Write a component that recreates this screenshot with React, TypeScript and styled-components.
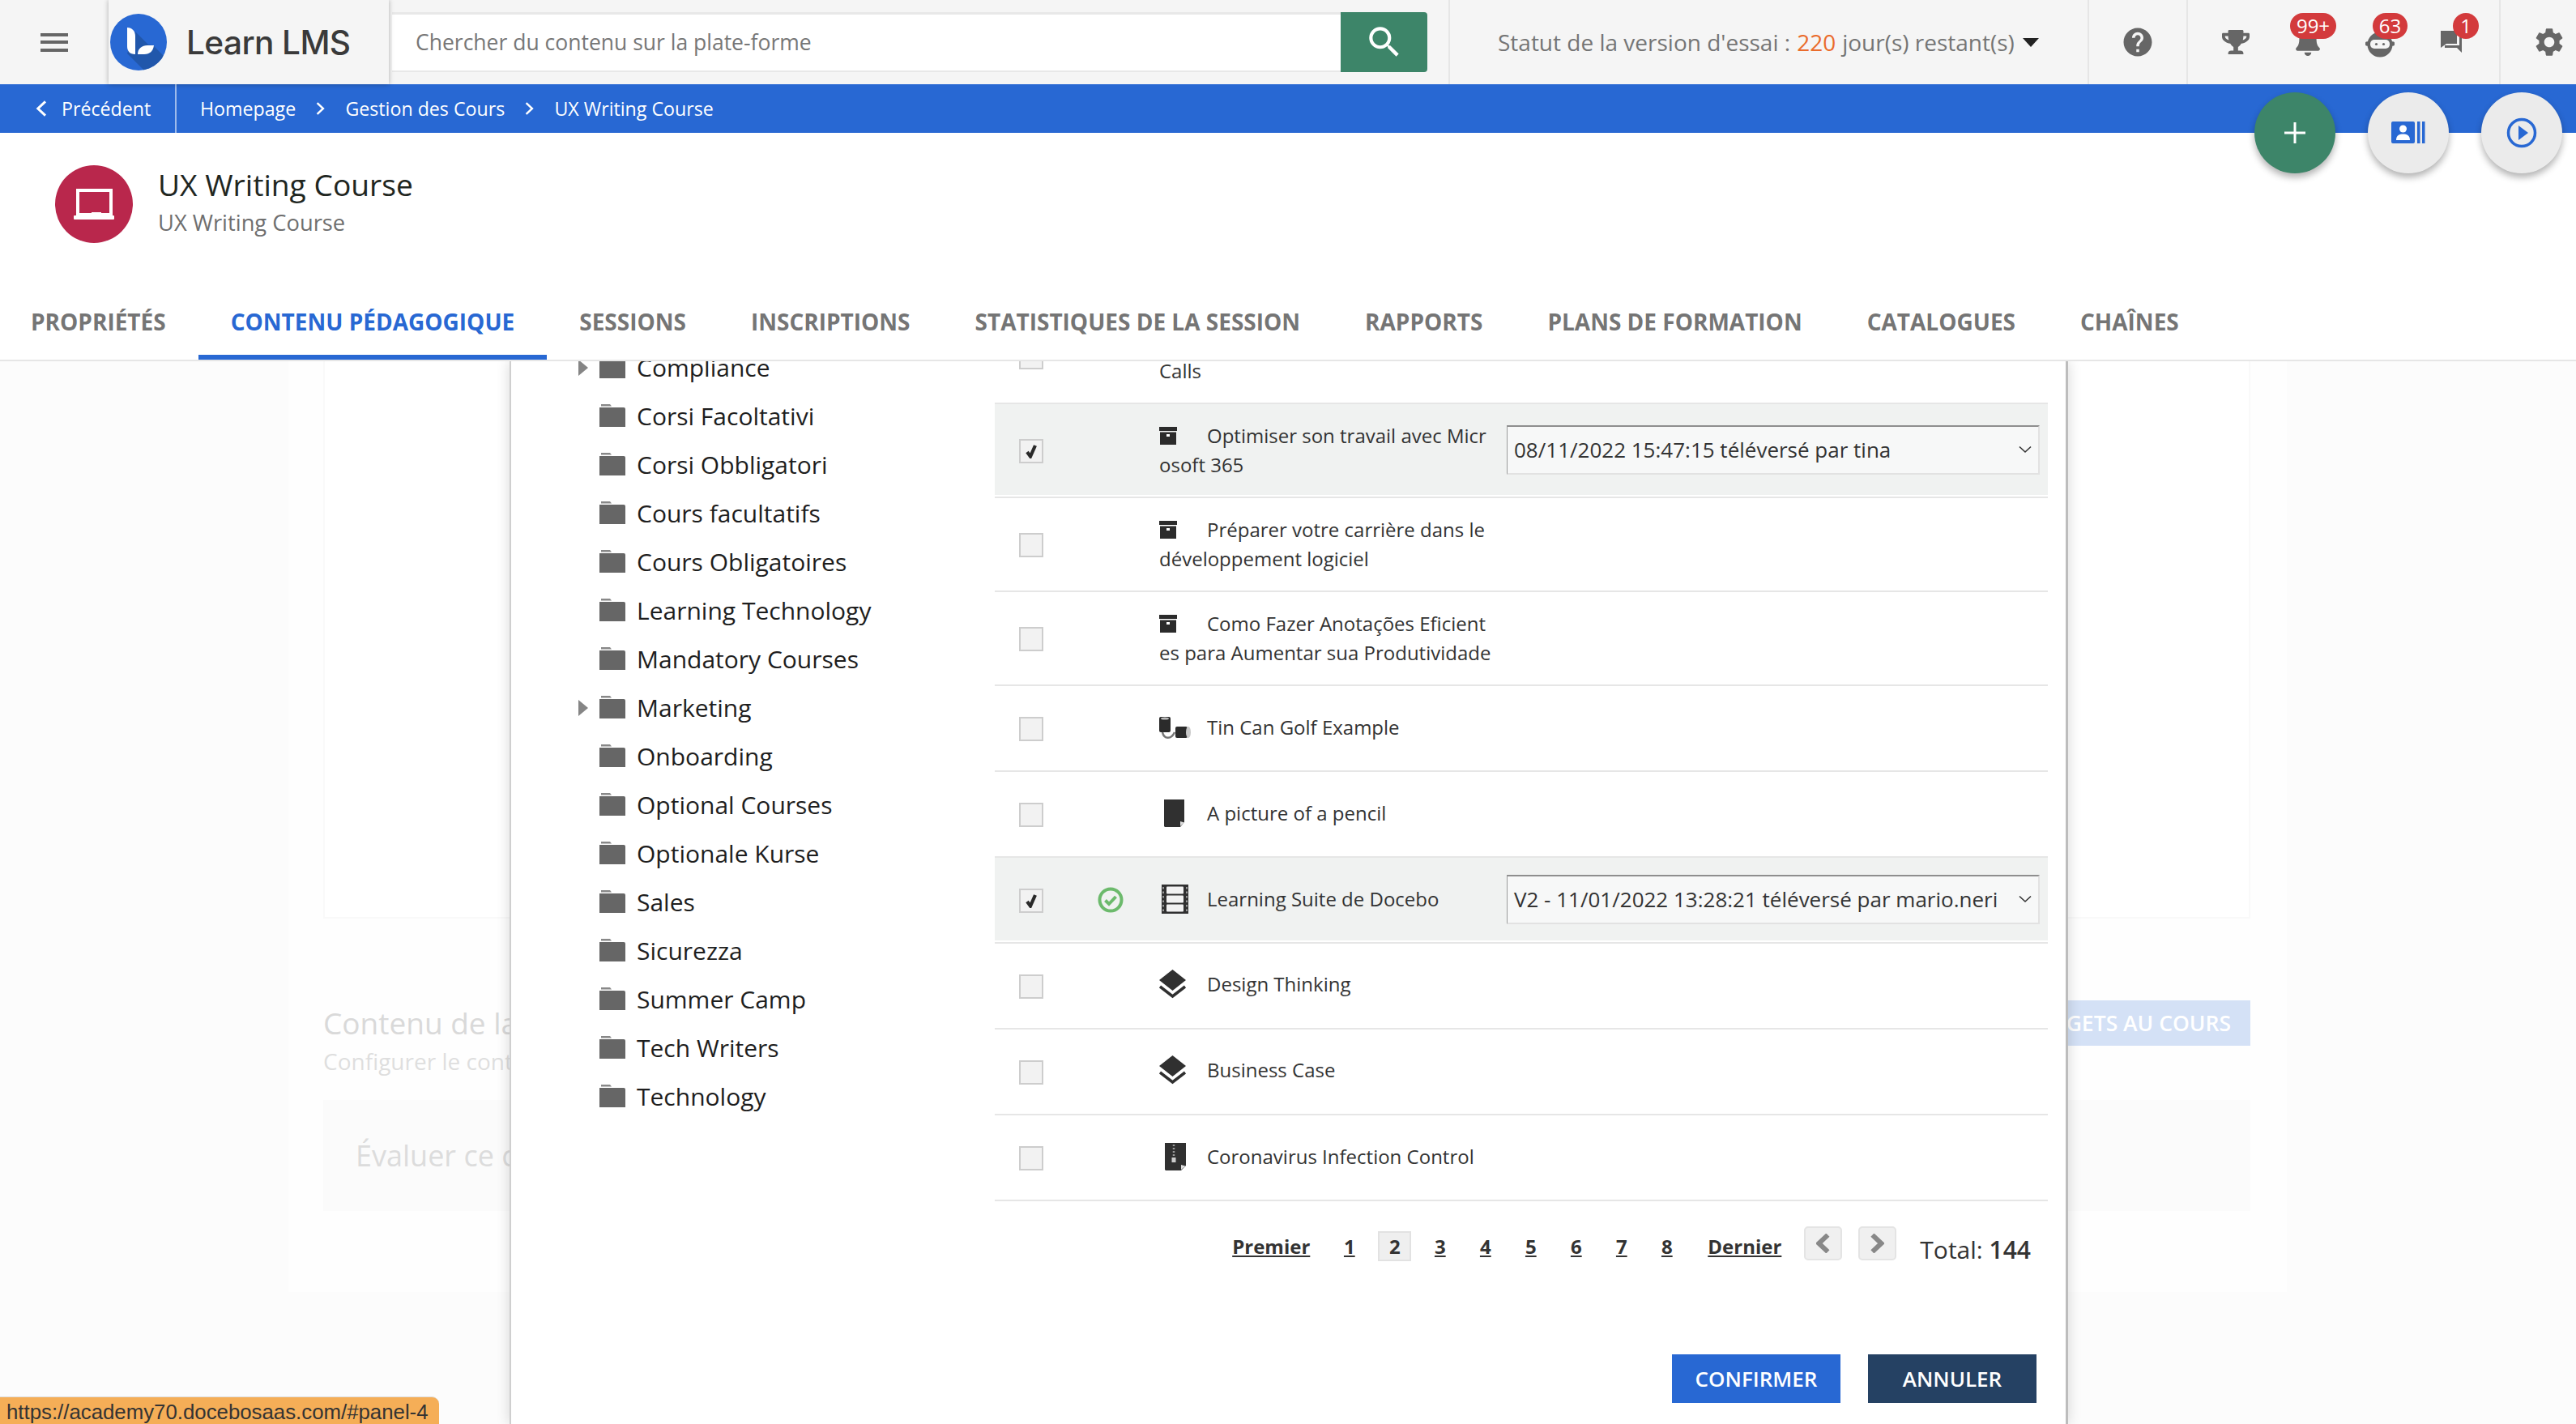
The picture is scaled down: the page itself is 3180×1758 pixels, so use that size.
import React from "react";
import styled, { createGlobalStyle } from "styled-components";
import { FaBell, FaTrophy } from "react-icons/fa";
import { MdHelp, MdSearch, MdSettings } from "react-icons/md";

const Global = createGlobalStyle`
  html, body { margin: 0; padding: 0; background: #fff; }
  * { box-sizing: border-box; }
  body { font-family: "Open Sans", "Noto Sans", sans-serif; color: #333; }
`;

const Page = styled.div`
  position: relative;
  width: 3180px;
  height: 1758px;
  overflow: hidden;
  display: flex;
  flex-direction: column;
  background: #fff;
`;

/* top bar */
const TopBar = styled.header`
  height: 104px;
  flex: none;
  display: flex;
  align-items: stretch;
  background: #f5f5f5;
`;
const MenuSlot = styled.div`
  width: 134px;
  display: flex;
  align-items: center;
  justify-content: center;
`;
const Hamburger = styled.div`
  width: 34px;
  height: 23px;
  border-top: 4px solid #666;
  border-bottom: 4px solid #666;
  position: relative;
  &::after {
    content: "";
    position: absolute;
    left: 0;
    right: 0;
    top: 5.5px;
    height: 4px;
    background: #666;
  }
`;
const LogoBlock = styled.div`
  width: 346px;
  display: flex;
  align-items: center;
  gap: 24px;
  padding-left: 2px;
  background: #f5f5f5;
  box-shadow: 0 0 6px rgba(0, 0, 0, 0.3);
  position: relative;
  z-index: 3;
`;
const LogoText = styled.span`
  font-family: Inter, "Open Sans", sans-serif;
  font-weight: 500;
  font-size: 40.6px;
  letter-spacing: -0.6px;
  color: #3a3a3a;
`;
const SearchGroup = styled.div`
  width: 1278px;
  margin: 15px 0 15px 4px;
  display: flex;
`;
const SearchField = styled.div`
  flex: 1;
  background: #fff;
  border-top: 3px solid #e8e8e8;
  border-bottom: 2px solid #e8e8e8;
  padding: 0 0 2px 29px;
  display: flex;
  align-items: center;
  font-size: 26.5px;
  color: #777;
`;
const SearchButton = styled.div`
  width: 107px;
  background: #3d8569;
  border-radius: 0 4px 4px 0;
  display: flex;
  align-items: center;
  justify-content: center;
  color: #fff;
  font-size: 50px;
`;
const StatusSlot = styled.div`
  width: 789px;
  margin-left: 26px;
  border-left: 2px solid #e6e6e6;
  padding-left: 59px;
  display: flex;
  align-items: center;
  font-size: 28px;
  color: #757575;
`;
const Orange = styled.span`
  color: #ea6c2c;
  margin: 0 8px;
`;
const Caret = styled.span`
  width: 0;
  height: 0;
  margin-left: 10px;
  border-left: 10px solid transparent;
  border-right: 10px solid transparent;
  border-top: 11px solid #222;
`;
const HelpSlot = styled.div`
  width: 122px;
  border-left: 2px solid #e6e6e6;
  display: flex;
  align-items: center;
  justify-content: center;
  color: #666;
  font-size: 42px;
`;
const NotifySlot = styled.div`
  width: 386px;
  border-left: 2px solid #e6e6e6;
  padding-left: 14px;
  display: flex;
  align-items: center;
`;
const NotifyItem = styled.div`
  position: relative;
  width: 89px;
  height: 60px;
  display: flex;
  align-items: center;
  justify-content: center;
  color: #666;
`;
const Badge = styled.span<{ $left: number; $w: number }>`
  position: absolute;
  top: -6px;
  left: ${(p) => p.$left}px;
  width: ${(p) => p.$w}px;
  height: 32px;
  border-radius: 16px;
  background: #d33a3c;
  color: #fff;
  font-size: 24px;
  line-height: 32px;
  text-align: center;
`;
const GearSlot = styled.div`
  width: 95px;
  padding-left: 26px;
  border-left: 2px solid #e6e6e6;
  display: flex;
  align-items: center;
  justify-content: center;
  color: #666;
  font-size: 42px;
`;

/* breadcrumb */
const Crumbs = styled.nav`
  height: 60px;
  flex: none;
  display: flex;
  align-items: center;
  background: #2868d3;
  color: #fff;
  font-size: 23.2px;
`;
const BackLink = styled.div`
  width: 218px;
  height: 100%;
  padding-left: 44px;
  border-right: 2px solid rgba(255, 255, 255, 0.55);
  display: flex;
  align-items: center;
  gap: 18px;
`;
const CrumbList = styled.div`
  display: flex;
  align-items: center;
  padding-left: 29px;
  gap: 25px;
`;

/* course header */
const CourseHead = styled.div`
  height: 176px;
  flex: none;
  padding: 40px 0 0 68px;
  display: flex;
  gap: 31px;
  background: #fff;
`;
const CourseBadge = styled.div`
  width: 96px;
  height: 96px;
  border-radius: 50%;
  background: #b9274c;
`;
const CourseTexts = styled.div`
  display: flex;
  flex-direction: column;
`;
const CourseTitle = styled.div`
  font-size: 37.2px;
  line-height: 48px;
  color: #21261f;
`;
const CourseSub = styled.div`
  font-size: 27.3px;
  line-height: 38px;
  margin-top: 4px;
  color: #6f6f6f;
`;

/* tabs */
const TabBar = styled.div`
  height: 106px;
  flex: none;
  padding: 10px 0 0 0;
  display: flex;
  background: #fff;
  border-bottom: 2px solid #e6e6e6;
  position: relative;
  z-index: 2;
`;
const Tab = styled.div<{ $active?: boolean; $first?: boolean }>`
  height: 94px;
  padding: 6px 40px 0;
  margin-left: ${(p) => (p.$first ? "-2px" : "0")};
  display: flex;
  align-items: center;
  font-size: 28px;
  font-weight: 700;
  color: ${(p) => (p.$active ? "#2868d3" : "#757575")};
  border-bottom: 6px solid ${(p) => (p.$active ? "#2868d3" : "transparent")};
`;

/* body */
const Body = styled.main`
  flex: 1;
  position: relative;
  overflow: hidden;
  background: #fcfcfc;
`;
const BackPanel = styled.div`
  margin-left: 356px;
  width: 2467px;
  height: 1149px;
  padding: 0 45px 0 43px;
  background: #fefefe;
`;
const BackCard = styled.div`
  height: 688px;
  border: 2px solid #f9f9f9;
  border-top: 0;
  background: #fff;
`;
const BackHeading = styled.div`
  margin-top: 101px;
  display: flex;
  justify-content: space-between;
  align-items: flex-start;
`;
const BackTexts = styled.div`
  padding-top: 4px;
`;
const BackTitle = styled.div`
  font-size: 37px;
  line-height: 48px;
  color: #d9d9d9;
`;
const BackSub = styled.div`
  font-size: 28px;
  line-height: 46px;
  color: #dedede;
`;
const BackButton = styled.div`
  height: 56px;
  padding: 0 24px;
  display: flex;
  align-items: center;
  background: #d4e1f6;
  color: #fff;
  font-size: 26.5px;
  font-weight: 600;
`;
const BackBox = styled.div`
  height: 137px;
  margin-top: 25px;
  padding-left: 40px;
  display: flex;
  align-items: center;
  background: #fbfbfb;
  font-size: 36px;
  color: #dcdcdc;
`;

/* modal */
const Modal = styled.section`
  position: absolute;
  top: 0;
  bottom: 0;
  left: 629px;
  width: 1924px;
  padding-right: 22px;
  display: flex;
  background: #fff;
  border-left: 2px solid #cfcfcf;
  border-right: 3px solid #bdbdbd;
  box-shadow: 0 0 16px rgba(0, 0, 0, 0.16);
  z-index: 1;
`;
const Tree = styled.ul`
  list-style: none;
  width: 597px;
  flex: none;
  margin: -23px 0 0;
  padding: 0 0 0 83px;
`;
const TreeItem = styled.li`
  height: 60px;
  display: flex;
  align-items: center;
  font-size: 30px;
  color: #1e1e1e;
`;
const TreeArrow = styled.span<{ $show?: boolean }>`
  width: 26px;
  flex: none;
  height: 22px;
  visibility: ${(p) => (p.$show ? "visible" : "hidden")};
  &::before {
    content: "";
    display: block;
    width: 0;
    height: 0;
    margin-top: 2px;
    border-top: 10px solid transparent;
    border-bottom: 10px solid transparent;
    border-left: 12px solid #858585;
  }
`;
const TreeLabel = styled.span`
  margin-left: 14px;
`;
const Listing = styled.div`
  flex: 1;
  min-width: 0;
  margin-top: -63px;
`;
const Row = styled.div<{ $h: number }>`
  height: ${(p) => p.$h}px;
  border-bottom: 2px solid #e6e6e6;
  padding-bottom: 2px;
`;
const RowInner = styled.div<{ $selected?: boolean }>`
  height: 100%;
  padding: 2px 10px 0 30px;
  display: grid;
  grid-template-columns: 97px 76px 429px 1fr;
  align-items: center;
  background: ${(p) => (p.$selected ? "#f0f2f1" : "transparent")};
`;
const Check = styled.span`
  width: 30px;
  height: 30px;
  margin-top: 2px;
  background: #f2f2f2;
  border: 2px solid #cdcdcd;
  display: flex;
  align-items: center;
  justify-content: center;
`;
const StatusCell = styled.div`
  display: flex;
`;
const RowText = styled.div<{ $shift?: number }>`
  width: 411px;
  margin-top: ${(p) => p.$shift ?? 0}px;
  font-size: 24px;
  line-height: 36px;
  color: #333;
  word-break: break-all;
`;
const IconSlot = styled.span`
  display: inline-block;
  width: 59px;
  height: 36px;
  vertical-align: top;
`;
const Picker = styled.div`
  height: 61px;
  margin-top: -2px;
  padding: 0 8px 0 8px;
  display: flex;
  align-items: center;
  justify-content: space-between;
  background: #f7f8f8;
  border-style: solid;
  border-color: #8e8e8e #e2e2e2 #e2e2e2 #9a9a9a;
  border-width: 2px 2px 2px 1px;
  font-size: 26px;
  color: #333;
`;

/* pagination */
const Pager = styled.div`
  margin-top: 31px;
  padding-right: 21px;
  display: flex;
  justify-content: flex-end;
  align-items: center;
  height: 42px;
`;
const PageLinks = styled.div`
  margin-top: 6px;
  display: flex;
  align-items: center;
  gap: 15px;
`;
const PageWord = styled.a<{ $left?: number; $right?: number }>`
  font-size: 24px;
  font-weight: 700;
  color: #333;
  text-decoration: underline;
  margin-left: ${(p) => p.$left ?? 0}px;
  margin-right: ${(p) => p.$right ?? 0}px;
`;
const PageNum = styled.a<{ $active?: boolean }>`
  width: 41px;
  height: 37px;
  display: flex;
  align-items: center;
  justify-content: center;
  font-size: 24px;
  font-weight: 700;
  color: #333;
  text-decoration: ${(p) => (p.$active ? "none" : "underline")};
  background: ${(p) => (p.$active ? "#efefef" : "transparent")};
  border: 2px solid ${(p) => (p.$active ? "#e2e2e2" : "transparent")};
`;
const NavButton = styled.span<{ $gap: number }>`
  width: 47px;
  height: 42px;
  margin-left: ${(p) => p.$gap}px;
  display: flex;
  align-items: center;
  justify-content: center;
  background: #f0f0f0;
  border: 2px solid #e4e4e4;
  border-radius: 5px;
`;
const Total = styled.div`
  margin: 14px 0 0 29px;
  font-size: 30px;
  color: #333;
  b {
    font-weight: 600;
  }
`;
const Actions = styled.div`
  margin-top: 116px;
  padding-right: 14px;
  display: flex;
  justify-content: flex-end;
  gap: 34px;
`;
const ActionButton = styled.div<{ $dark?: boolean }>`
  width: 208px;
  height: 60px;
  display: flex;
  align-items: center;
  justify-content: center;
  font-size: 26px;
  font-weight: 600;
  color: #fff;
  background: ${(p) => (p.$dark ? "#254163" : "#2868d3")};
`;

/* overlays */
const Fabs = styled.div`
  position: absolute;
  top: 114px;
  left: 2783px;
  display: flex;
  gap: 40px;
  z-index: 5;
`;
const Fab = styled.div<{ $green?: boolean }>`
  width: 100px;
  height: 100px;
  border-radius: 50%;
  display: flex;
  align-items: center;
  justify-content: center;
  background: ${(p) => (p.$green ? "#3d8569" : "#ebebeb")};
  box-shadow: 0 5px 8px rgba(0, 0, 0, 0.3);
`;
const UrlTip = styled.div`
  position: absolute;
  left: 0;
  bottom: 0;
  width: 542px;
  height: 34px;
  padding-left: 8px;
  overflow: hidden;
  background: #f5ae57;
  border-top: 1px solid #ddd;
  border-radius: 0 9px 0 0;
  font-family: "Liberation Sans", Arial, sans-serif;
  font-size: 25.8px;
  line-height: 37px;
  color: #333;
  z-index: 6;
`;

/* drawings */
const LogoMark = () => (
  <svg width="70" height="70" viewBox="0 0 70 70">
    <defs>
      <clipPath id="lc">
        <circle cx="35" cy="35" r="35" />
      </clipPath>
    </defs>
    <circle cx="35" cy="35" r="35" fill="#2868d3" />
    <polygon points="31,22 47,38 53,39 70,56 70,70 42,70 21,49" fill="#2157ab" clipPath="url(#lc)" />
    <path d="M21 17 C27 17 31 21 31 28 L31 50 C24 50 21 46 21 40 Z" fill="#fff" />
    <path d="M34 50 C34 43 39 39 46 39 L54 39 C53 46 49 50 42 50 Z" fill="#fff" />
  </svg>
);
const LaptopMark = () => (
  <svg width="96" height="96" viewBox="0 0 96 96">
    <rect x="28" y="31" width="41" height="30" fill="none" stroke="#fff" strokeWidth="4" />
    <rect x="23" y="62" width="50" height="5" rx="1" fill="#fff" />
    <rect x="45" y="58" width="12" height="5" fill="#fff" />
  </svg>
);
const Chevron = ({ left = false, h = 16, sw = 2.4, color = "#fff" }: { left?: boolean; h?: number; sw?: number; color?: string }) => (
  <svg width={h * 0.7} height={h} viewBox="0 0 7 10" style={{ flex: "none" }}>
    <path d={left ? "M6 .7 1.4 5 6 9.3" : "M1 .7 5.6 5 1 9.3"} fill="none" stroke={color} strokeWidth={sw * 10 / h} />
  </svg>
);
const Robot = () => (
  <svg width="36" height="32" viewBox="0 0 36 32" style={{ marginTop: 6 }}>
    <circle cx="18" cy="16" r="15.5" fill="#666" />
    <circle cx="2.5" cy="15" r="2.8" fill="#666" />
    <circle cx="33.5" cy="15" r="2.8" fill="#666" />
    <rect x="6" y="10" width="24" height="11" rx="5" fill="#f5f5f5" />
    <circle cx="13.5" cy="15.5" r="1.6" fill="#666" />
    <circle cx="22.5" cy="15.5" r="1.6" fill="#666" />
  </svg>
);
const Chat = () => (
  <svg width="30" height="30" viewBox="0 0 30 30">
    <path d="M1 1H21V17H8L1 22Z" fill="#666" />
    <path d="M24 8H27V28L21 22H6V19H24Z" fill="#666" />
  </svg>
);
const Folder = () => (
  <svg width="32" height="30" viewBox="0 0 32 30" style={{ flex: "none" }}>
    <path d="M2 1H13L15 3.5H2Z" fill="#888" />
    <path d="M0 5H30Q32 5 32 7V29H0Z" fill="#666" />
  </svg>
);
const Tick = () => (
  <svg width="14" height="18" viewBox="0 0 14 18">
    <path d="M2 10 6 15.5 12 2" fill="none" stroke="#2a2a2a" strokeWidth="4.2" />
  </svg>
);
const GreenCheck = () => (
  <svg width="32" height="32" viewBox="0 0 32 32">
    <circle cx="16" cy="16" r="13.5" fill="none" stroke="#6cba6c" strokeWidth="4" />
    <path d="M9.5 16.5 14 21 22.5 12" fill="none" stroke="#6cba6c" strokeWidth="4" />
  </svg>
);
const Archive = () => (
  <svg width="40" height="36" viewBox="0 0 40 36">
    <rect x="0" y="7" width="22" height="5" fill="#2b2b2b" />
    <rect x="1" y="13.5" width="20" height="15.5" fill="#2b2b2b" />
    <rect x="9" y="16" width="4" height="3" fill="#fff" />
  </svg>
);
const TinCans = () => (
  <svg width="40" height="36" viewBox="0 0 40 36">
    <rect x="0" y="5" width="14" height="19" rx="2" fill="#2b2b2b" />
    <ellipse cx="7" cy="7" rx="5" ry="1.6" fill="#bbb" />
    <path d="M4 24C6 33 15 33 19 24" fill="none" stroke="#777" strokeWidth="2.5" />
    <rect x="20" y="17" width="15" height="14" rx="2" fill="#2b2b2b" />
    <ellipse cx="36" cy="24" rx="3" ry="7" fill="#c9c9c9" />
  </svg>
);
const PaperDoc = () => (
  <svg width="40" height="36" viewBox="0 0 40 36">
    <path d="M6 1H31V29L26 35H7L6 34Z" fill="#303030" />
    <path d="M26 34L31 29.5 L26 28Z" fill="#ddd" />
  </svg>
);
const Film = () => (
  <svg width="40" height="36" viewBox="0 0 40 36">
    <rect x="3" y="0" width="33" height="36" fill="#303030" />
    <path d="M5 3V33M34 3V33" stroke="#999" strokeWidth="2" strokeDasharray="2.5 3" />
    <rect x="9" y="2.5" width="21" height="9" rx="1" fill="#f2f2f2" />
    <rect x="9" y="13.5" width="21" height="9" rx="1" fill="#f2f2f2" />
    <rect x="9" y="24.5" width="21" height="9" rx="1" fill="#f2f2f2" />
  </svg>
);
const Stack = () => (
  <svg width="40" height="36" viewBox="0 0 40 36">
    <path d="M16.5 0 33 13 16.5 26 0 13Z" fill="#303030" />
    <path d="M1 21 16.5 33 32 21" fill="none" stroke="#303030" strokeWidth="3.5" />
  </svg>
);
const ZipDoc = () => (
  <svg width="40" height="36" viewBox="0 0 40 36">
    <path d="M7 1H33V29L27 35H8L7 34Z" fill="#303030" />
    <path d="M27 34L32.5 29.5 L27 28Z" fill="#ddd" />
    <path d="M18 3V18" stroke="#999" strokeWidth="2.5" strokeDasharray="2 2" />
    <rect x="15.5" y="19" width="5" height="6" fill="#ccc" />
  </svg>
);
const Down = () => (
  <svg width="16" height="10" viewBox="0 0 16 10">
    <path d="M1 1.5 8 8 15 1.5" fill="none" stroke="#333" strokeWidth="1.6" />
  </svg>
);
const Plus = () => (
  <svg width="28" height="28" viewBox="0 0 28 28">
    <path d="M14 1V27M1 14H27" stroke="#fff" strokeWidth="3" />
  </svg>
);
const CardIcon = () => (
  <svg width="42" height="28" viewBox="0 0 42 28">
    <rect x="0" y="0" width="29" height="27" rx="2" fill="#2868d3" />
    <circle cx="14.5" cy="9" r="4.5" fill="#fff" />
    <path d="M6 23C6 17 10 15.5 14.5 15.5S23 17 23 23Z" fill="#fff" />
    <rect x="32" y="0" width="3.5" height="27" fill="#2868d3" />
    <rect x="38" y="0" width="3.5" height="27" fill="#2868d3" />
  </svg>
);
const PlayIcon = () => (
  <svg width="38" height="38" viewBox="0 0 38 38">
    <circle cx="19" cy="19" r="16.5" fill="none" stroke="#2868d3" strokeWidth="3.5" />
    <path d="M15 10 27 19 15 28Z" fill="#2868d3" />
  </svg>
);

const tabs = ["PROPRIÉTÉS", "CONTENU PÉDAGOGIQUE", "SESSIONS", "INSCRIPTIONS", "STATISTIQUES DE LA SESSION", "RAPPORTS", "PLANS DE FORMATION", "CATALOGUES", "CHAÎNES"];
const folders: [string, boolean?][] = [
  ["Compliance", true], ["Corsi Facoltativi"], ["Corsi Obbligatori"], ["Cours facultatifs"], ["Cours Obligatoires"],
  ["Learning Technology"], ["Mandatory Courses"], ["Marketing", true], ["Onboarding"], ["Optional Courses"],
  ["Optionale Kurse"], ["Sales"], ["Sicurezza"], ["Summer Camp"], ["Tech Writers"], ["Technology"],
];
type Item = { h: number; icon?: React.ReactNode; text: string; checked?: boolean; ok?: boolean; version?: string; shift?: number };
const rows: Item[] = [
  { h: 116, shift: 36, text: "Calls" },
  { h: 116, icon: <Archive />, text: "Optimiser son travail avec Microsoft 365", checked: true, version: "08/11/2022 15:47:15 téléversé par tina" },
  { h: 116, icon: <Archive />, text: "Préparer votre carrière dans le développement logiciel" },
  { h: 116, icon: <Archive />, text: "Como Fazer Anotações Eficientes para Aumentar sua Produtividade" },
  { h: 106, shift: -2, icon: <TinCans />, text: "Tin Can Golf Example" },
  { h: 106, shift: -3, icon: <PaperDoc />, text: "A picture of a pencil" },
  { h: 106, shift: -3, icon: <Film />, text: "Learning Suite de Docebo", checked: true, ok: true, version: "V2 - 11/01/2022 13:28:21 téléversé par mario.neri" },
  { h: 106, shift: -4, icon: <Stack />, text: "Design Thinking" },
  { h: 106, shift: -4, icon: <Stack />, text: "Business Case" },
  { h: 106, shift: -3, icon: <ZipDoc />, text: "Coronavirus Infection Control" },
];

export default function App() {
  return (
    <Page>
      <Global />
      <TopBar>
        <MenuSlot><Hamburger /></MenuSlot>
        <LogoBlock><LogoMark /><LogoText>Learn LMS</LogoText></LogoBlock>
        <SearchGroup>
          <SearchField>Chercher du contenu sur la plate-forme</SearchField>
          <SearchButton><MdSearch /></SearchButton>
        </SearchGroup>
        <StatusSlot>
          Statut de la version d'essai :<Orange>220</Orange>jour(s) restant(s)<Caret />
        </StatusSlot>
        <HelpSlot><MdHelp /></HelpSlot>
        <NotifySlot>
          <NotifyItem><FaTrophy size={34} /></NotifyItem>
          <NotifyItem><FaBell size={34} /><Badge $left={23} $w={57}>99+</Badge></NotifyItem>
          <NotifyItem><Robot /><Badge $left={36} $w={43}>63</Badge></NotifyItem>
          <NotifyItem><Chat /><Badge $left={46} $w={32}>1</Badge></NotifyItem>
        </NotifySlot>
        <GearSlot><MdSettings /></GearSlot>
      </TopBar>
      <Crumbs>
        <BackLink><Chevron left h={20} sw={3} />Précédent</BackLink>
        <CrumbList>
          <span>Homepage</span><Chevron />
          <span>Gestion des Cours</span><Chevron />
          <span>UX Writing Course</span>
        </CrumbList>
      </Crumbs>
      <CourseHead>
        <CourseBadge><LaptopMark /></CourseBadge>
        <CourseTexts>
          <CourseTitle>UX Writing Course</CourseTitle>
          <CourseSub>UX Writing Course</CourseSub>
        </CourseTexts>
      </CourseHead>
      <TabBar>
        {tabs.map((t, i) => (
          <Tab key={t} $first={i === 0} $active={i === 1}>{t}</Tab>
        ))}
      </TabBar>
      <Body>
        <BackPanel>
          <BackCard />
          <BackHeading>
            <BackTexts>
              <BackTitle>Contenu de la page</BackTitle>
              <BackSub>Configurer le contenu</BackSub>
            </BackTexts>
            <BackButton>AJOUTER DES WIDGETS AU COURS</BackButton>
          </BackHeading>
          <BackBox>Évaluer ce cours</BackBox>
        </BackPanel>
        <Modal>
          <Tree>
            {folders.map(([name, arrow]) => (
              <TreeItem key={name}>
                <TreeArrow $show={arrow} />
                <Folder />
                <TreeLabel>{name}</TreeLabel>
              </TreeItem>
            ))}
          </Tree>
          <Listing>
            {rows.map((r) => (
              <Row key={r.text} $h={r.h}>
                <RowInner $selected={r.checked}>
                  <Check>{r.checked && <Tick />}</Check>
                  <StatusCell>{r.ok && <GreenCheck />}</StatusCell>
                  <RowText $shift={r.shift}>{r.icon && <IconSlot>{r.icon}</IconSlot>}{r.text}</RowText>
                  {r.version ? <Picker>{r.version}<Down /></Picker> : <span />}
                </RowInner>
              </Row>
            ))}
            <Pager>
              <PageLinks>
                <PageWord $right={13}>Premier</PageWord>
                {[1, 2, 3, 4, 5, 6, 7, 8].map((n) => (
                  <PageNum key={n} $active={n === 2}>{n}</PageNum>
                ))}
                <PageWord $left={15}>Dernier</PageWord>
              </PageLinks>
              <NavButton $gap={28}><Chevron left h={24} sw={6} color="#888" /></NavButton>
              <NavButton $gap={20}><Chevron h={24} sw={6} color="#888" /></NavButton>
              <Total>Total: <b>144</b></Total>
            </Pager>
            <Actions>
              <ActionButton>CONFIRMER</ActionButton>
              <ActionButton $dark>ANNULER</ActionButton>
            </Actions>
          </Listing>
        </Modal>
      </Body>
      <Fabs>
        <Fab $green><Plus /></Fab>
        <Fab><CardIcon /></Fab>
        <Fab><PlayIcon /></Fab>
      </Fabs>
      <UrlTip>https://academy70.docebosaas.com/#panel-4</UrlTip>
    </Page>
  );
}
